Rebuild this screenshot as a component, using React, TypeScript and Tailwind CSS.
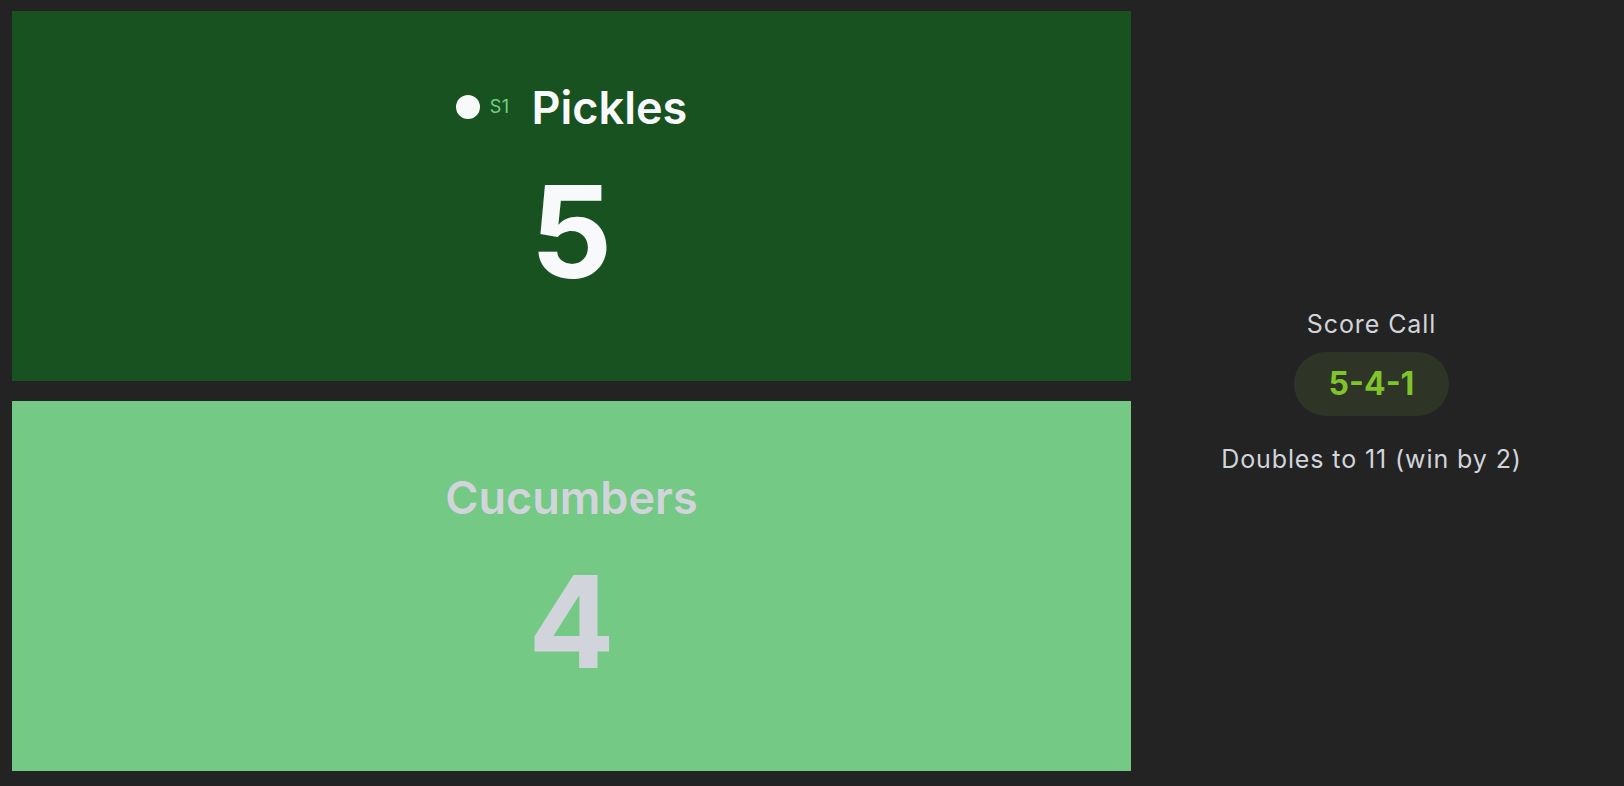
import React from "react";

type Team = {
  name: string;
  score: number;
  serving?: string;
  bg: string;
  text: string;
};

function TeamPanel({ team }: { team: Team }) {
  return (
    <div
      className={`h-[370px] flex flex-col items-center justify-center pb-3 ${team.bg} ${team.text}`}
    >
      <div className="flex items-center">
        {team.serving && (
          <>
            <span className="w-6 h-6 rounded-full bg-[#f8f9fb] mr-[10px]" />
            <span className="text-[18px] leading-none text-[#72cf82] mr-[22px] tracking-[0.5px]">
              {team.serving}
            </span>
          </>
        )}
        <span className="text-[45px] leading-none font-semibold">
          {team.name}
        </span>
      </div>
      <div className="mt-[38px] text-[128px] leading-none font-bold">
        {team.score}
      </div>
    </div>
  );
}

export default function App() {
  const teams: Team[] = [
    {
      name: "Pickles",
      score: 5,
      serving: "S1",
      bg: "bg-[#185221]",
      text: "text-[#f8f9fb]",
    },
    {
      name: "Cucumbers",
      score: 4,
      bg: "bg-[#74c985]",
      text: "text-[#d1d5db]",
    },
  ];

  return (
    <div className="h-[786px] w-full bg-[#232323] flex pt-[11px] pb-[15px] px-3 font-['Inter',sans-serif]">
      {/* Score panels */}
      <div className="w-[1119px] flex flex-col gap-5">
        {teams.map((t) => (
          <TeamPanel key={t.name} team={t} />
        ))}
      </div>

      {/* Score call */}
      <div className="flex-1 flex flex-col items-center justify-center">
        <div className="text-[25px] leading-8 tracking-[0.9px] text-[#d1d5db]">
          Score Call
        </div>
        <div className="mt-3 rounded-full bg-[#2e3426] px-[35px] py-3 text-[32px] leading-[40px] font-bold text-[#7ec42a]">
          5-4-1
        </div>
        <div className="mt-[27px] text-[25px] leading-8 tracking-[0.9px] text-[#d1d5db]">
          Doubles to 11 (win by 2)
        </div>
      </div>
    </div>
  );
}
